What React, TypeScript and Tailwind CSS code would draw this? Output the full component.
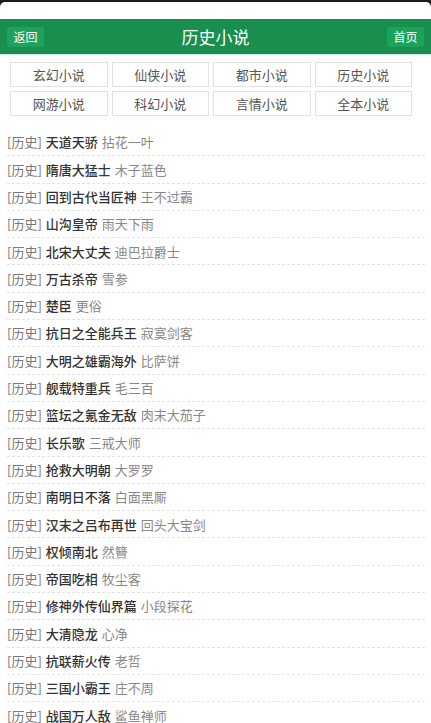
import React from 'react';

const categories = [
    '玄幻小说', '仙侠小说', '都市小说', '历史小说',
    '网游小说', '科幻小说', '言情小说', '全本小说',
];

const books: [string, string][] = [
    ['天道天骄', '拈花一叶'],
    ['隋唐大猛士', '木子蓝色'],
    ['回到古代当匠神', '王不过霸'],
    ['山沟皇帝', '雨天下雨'],
    ['北宋大丈夫', '迪巴拉爵士'],
    ['万古杀帝', '雪参'],
    ['楚臣', '更俗'],
    ['抗日之全能兵王', '寂寞剑客'],
    ['大明之雄霸海外', '比萨饼'],
    ['舰载特重兵', '毛三百'],
    ['篮坛之氪金无敌', '肉末大茄子'],
    ['长乐歌', '三戒大师'],
    ['抢救大明朝', '大罗罗'],
    ['南明日不落', '白面黑厮'],
    ['汉末之吕布再世', '回头大宝剑'],
    ['权倾南北', '然籫'],
    ['帝国吃相', '牧尘客'],
    ['修神外传仙界篇', '小段探花'],
    ['大清隐龙', '心净'],
    ['抗联薪火传', '老哲'],
    ['三国小霸王', '庄不周'],
    ['战国万人敌', '鲨鱼禅师'],
];

const font = { fontFamily: '"Noto Sans CJK SC", "Noto Sans", sans-serif' };

export default function App() {
    return (
        <div className="min-h-screen bg-white" style={font}>
            {/* top frame edge */}
            <div className="bg-[#1c1c1c] pt-[2px]">
                <div className="h-[17px] rounded-t-[5px] bg-white" />
            </div>

            {/* header */}
            <div className="relative flex h-[36px] items-center justify-between border-b border-[#cfe9dc] bg-[#188f4f] px-[7px]">
                <button className="flex h-[20px] w-[37px] items-center justify-center rounded-[3px] bg-[#1ca35b] text-[12px] text-white">
                    返回
                </button>
                <h1 className="absolute left-1/2 -translate-x-1/2 text-[17px] font-normal text-white">历史小说</h1>
                <button className="flex h-[20px] w-[37px] items-center justify-center rounded-[3px] bg-[#1ca35b] text-[12px] text-white">
                    首页
                </button>
            </div>

            {/* categories */}
            <div className="ml-[10px] mt-[7px] grid w-[402px] grid-cols-4 gap-[4px]">
                {categories.map((c) => (
                    <div
                        key={c}
                        className="flex h-[25px] items-center justify-center border border-[#e2e2e2] text-[13px] text-[#555]"
                    >
                        {c}
                    </div>
                ))}
            </div>

            {/* book list */}
            <ul className="ml-[7px] mt-[13px] w-[418px]">
                {books.map(([title, author]) => (
                    <li
                        key={title}
                        className="flex h-[27.3px] items-center whitespace-nowrap border-b border-dashed border-[#e3e3e3] text-[13px]"
                    >
                        <span className="text-[#777]">[历史]</span>
                        <span className="ml-[4px] font-medium text-[#333]">{title}</span>
                        <span className="ml-[4px] text-[#888]">{author}</span>
                    </li>
                ))}
            </ul>
        </div>
    );
}
